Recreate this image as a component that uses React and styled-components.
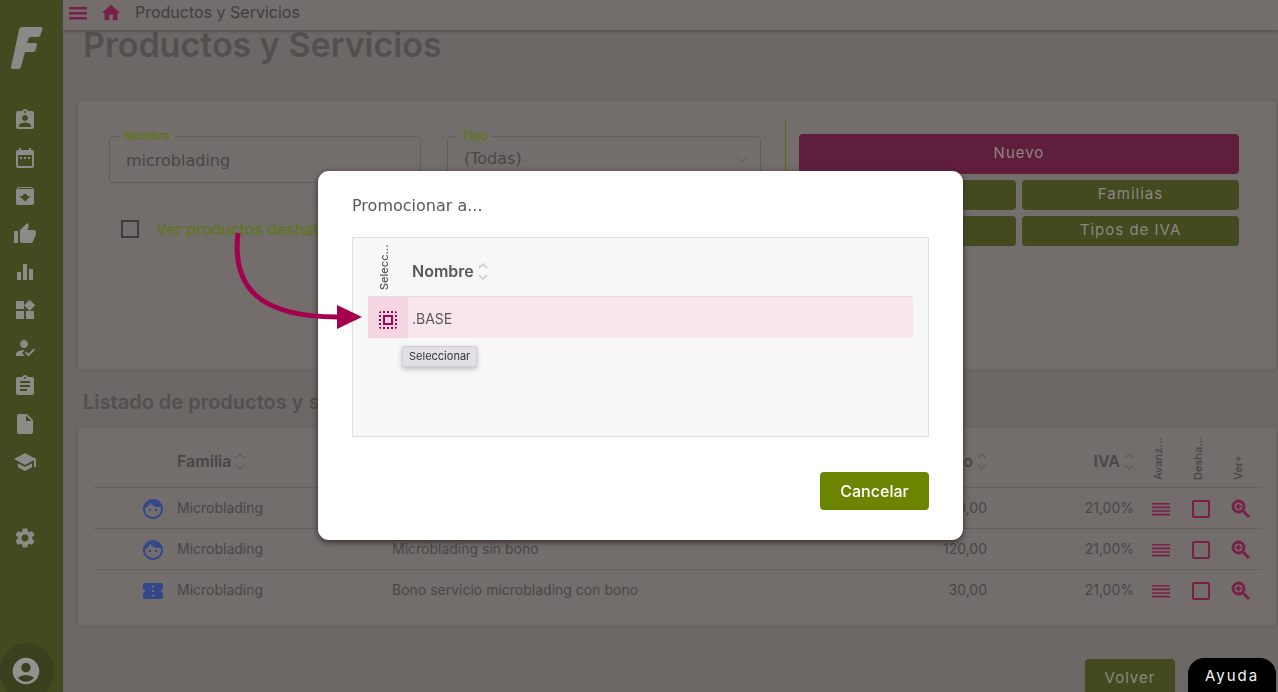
import React from "react";
import styled, { createGlobalStyle, css } from "styled-components";
import {
  MdAssignmentInd, MdDateRange, MdArchive, MdThumbUp, MdEqualizer, MdWidgets,
  MdHowToReg, MdAssignment, MdInsertDriveFile, MdSchool, MdSettings, MdAccountCircle,
  MdHome, MdFace, MdConfirmationNumber, MdCheckBoxOutlineBlank,
  MdZoomIn, MdSelectAll,
} from "react-icons/md";

const c = {
  page: "#6c6866",
  card: "#736d6c",
  line: "#676361",
  text: "#4a4645",
  title: "#544f4e",
  olive: "#444a20",
  berry: "#5f1e3c",
  berryIcon: "#7a1f47",
  lime: "#5b7810",
  blue: "#33488a",
};

const sans = `Inter, "Liberation Sans", sans-serif`;
const humanist = `"DejaVu Sans", "Noto Sans", sans-serif`;

const Global = createGlobalStyle`
  * { box-sizing: border-box; }
  body { margin: 0; background: ${c.page}; color: ${c.text}; font: 14px/20px ${sans}; overflow: hidden; }
  button, input, select { font: inherit; color: inherit; }
  button { border: 0; padding: 0; background: none; }
  h1, h2, p { margin: 0; }
`;

const Shell = styled.div`
  display: flex;
  height: 100vh;
  overflow: hidden;
`;

const Sidebar = styled.nav`
  flex: 0 0 63px;
  display: flex;
  flex-direction: column;
  background: ${c.olive};
  color: #8b8b88;
`;

const Logo = styled.a`
  display: block;
  height: 101px;
  padding: 26px 0 0 10px;
  color: #898a86;
`;

const NavList = styled.ul`
  list-style: none;
  margin: 0;
  padding: 0 0 0 13px;
`;

const NavItem = styled.li`
  height: 38px;
  display: flex;
  align-items: center;
  margin-top: ${(p) => (p.$apart ? "38px" : "0")};
`;

const IconLink = styled.a`
  display: flex;
  color: inherit;
`;

const Account = styled.button`
  width: 54px;
  height: 56px;
  flex: none;
  margin-top: auto;
  margin-bottom: -7px;
  padding-right: 2px;
  border-radius: 28px;
  background: #3a3f1d;
  display: grid;
  place-items: center;
  color: #92928f;
`;

const Main = styled.main`
  flex: 1;
  min-width: 0;
`;

const TopBar = styled.header`
  height: 30px;
  display: flex;
  align-items: center;
  padding: 0 5px 4px;
  background: ${c.card};
  box-shadow: 0 1px 3px #4d4947;
  position: relative;
  color: #413d3c;
`;

const BarButton = styled.button`
  width: 32px;
  height: 24px;
  display: flex;
  align-items: center;
  color: ${c.berryIcon};
`;

const Crumb = styled.span`
  margin-left: 3px;
  padding-bottom: 2px;
  font-size: 16px;
`;

const Title = styled.h1`
  padding: 0 20px;
  height: 70px;
  font-size: 34px;
  line-height: 30px;
  font-weight: 600;
  color: ${c.title};
`;

const Card = styled.section`
  margin: 0 1px 0 14px;
  background: ${c.card};
  border: 1px solid ${c.line};
  border-radius: 4px;
  box-shadow: 0 0 3px ${c.line};
`;

const FilterCard = styled(Card)`
  height: 270px;
  display: flex;
  padding: 20px 37px 0 31px;
`;

const Filters = styled.div`
  flex: 1;
  padding-right: 24px;
`;

const FieldRow = styled.div`
  display: grid;
  grid-template-columns: 312fr 314fr;
  gap: 26px;
`;

const Field = styled.fieldset`
  min-width: 0;
  height: 55px;
  margin: 0;
  margin-top: 7px;
  padding: 0 12px 0 16px;
  border: 1px solid #625d5c;
  border-radius: 4px;
  position: relative;

  legend {
    margin-left: -7px;
    padding: 0 5px;
    color: ${c.lime};
    font-size: 12px;
    line-height: 16px;
    font-weight: 500;
  }
`;

const control = css`
  display: block;
  width: 100%;
  height: 28px;
  margin-top: 2px;
  padding: 0;
  border: 0;
  background: none;
  outline: 0;
  font: 16px/24px ${humanist};
  color: ${c.text};
  appearance: none;
`;

const TextInput = styled.input`${control}`;
const Select = styled.select`
  ${control}
  margin-top: 1px;
`;

const Caret = styled.svg`
  position: absolute;
  right: 12px;
  top: 12px;
  pointer-events: none;
`;

const CheckLabel = styled.label`
  display: flex;
  align-items: center;
  gap: 17px;
  margin: 36px 0 0 12px;
  font-size: 16px;
  color: ${c.lime};
  white-space: nowrap;

  input {
    appearance: none;
    width: 18px;
    height: 18px;
    margin: 0;
    border: 2px solid #3f3b3a;
  }
`;

const Actions = styled.div`
  flex: 0 0 454px;
  border-left: 1px solid #566d14;
  height: 124px;
  padding: 13px 0 0 13px;
  display: grid;
  grid-template-columns: 1fr 1fr;
  grid-template-rows: 40px 30px 30px;
  gap: 6px;
`;

const Button = styled.button`
  border-radius: 4px;
  background: ${(p) => (p.$berry ? c.berry : c.olive)};
  grid-column: ${(p) => (p.$berry ? "1 / -1" : "auto")};
  color: #8b8784;
  font-size: 15px;
  letter-spacing: 1px;
  padding-bottom: 2px;
`;

const Subtitle = styled.h2`
  padding: 21px 20px 0;
  height: 57px;
  font-size: 20px;
  line-height: 22px;
  font-weight: 600;
  color: ${c.title};
`;

const TableCard = styled(Card)`
  height: 199px;
  padding: 0 14px 0 15px;
`;

const Table = styled.table`
  width: 100%;
  table-layout: fixed;
  border-collapse: collapse;

  th, td { padding: 0; text-align: left; white-space: nowrap; }
  thead tr { height: 59px; }
  tbody tr { height: 41px; border-top: 1px solid #66605f; }
  td { vertical-align: middle; }
  th { font-weight: 600; font-size: 16px; }
`;

const Num = styled.td`
  && { text-align: right; }
`;

const HeadLabel = styled.span`
  display: flex;
  align-items: center;
  justify-content: ${(p) => (p.$end ? "flex-end" : "flex-start")};
  gap: 4px;
  padding-top: ${(p) => (p.$low ? "8px" : "0")};
`;

const Upright = styled.span`
  display: block;
  height: 46px;
  margin: 0 0 0 ${(p) => (p.$near ? "8px" : "16px")};
  writing-mode: vertical-rl;
  transform: rotate(180deg);
  font-size: 11px;
  line-height: 16px;
  font-weight: 500;
`;

const CellButton = styled.button`
  display: flex;
  margin: 3px 0 0 ${(p) => p.$indent || "8px"};
  color: ${(p) => p.$color || c.berryIcon};

  path:not([fill="none"]) { stroke-width: ${(p) => (p.$bold ? 1 : 0)}; }
  path[fill="none"] { stroke: none; }
`;

const Footer = styled.footer`
  display: flex;
  justify-content: flex-end;
  align-items: flex-start;
  gap: 13px;
  padding: 32px 2px 0 0;
`;

const FooterButton = styled(Button)`
  width: 90px;
  height: 38px;
  padding: 0;
  margin-top: 1px;
`;

const HelpButton = styled.button`
  width: 88px;
  height: 40px;
  border-radius: 16px 16px 0 0;
  background: #000;
  color: #f4f4f4;
  font-size: 15px;
  letter-spacing: 2px;
  padding-bottom: 4px;
`;

const Overlay = styled.div`
  position: fixed;
  inset: 0;
  display: grid;
  place-items: center;
  padding: 20px 0 1px 3px;
`;

const Dialog = styled.section`
  width: 645px;
  padding: 23px 34px 30px;
  border-radius: 11px;
  background: #fff;
  box-shadow: 0 2px 6px #2e2b2a;
  color: #58585a;
  position: relative;
`;

const DialogTitle = styled.p`
  font: 16px/24px ${humanist};
`;

const Grid = styled.div`
  height: 200px;
  margin: 19px 0 35px;
  padding: 0 15px;
  border: 1px solid #dedede;
  background: #f7f7f7;
`;

const GridTable = styled.table`
  width: 100%;
  border-collapse: collapse;
  table-layout: fixed;

  th, td { padding: 0; text-align: left; }
  th { height: 58px; font-size: 16px; font-weight: 600; }
  tbody tr { height: 42px; background: #f8e6ec; border-top: 1px solid #e4dde0; }
  td:first-child { background: #f6d5e2; padding-top: 2px; }
  td:nth-child(2) { padding: 4px 0 0 4px; }
  th:nth-child(2) { padding: 8px 0 0 4px; }
`;

const DialogFooter = styled.div`
  display: flex;
  justify-content: flex-end;
`;

const Cancel = styled.button`
  width: 109px;
  height: 38px;
  border-radius: 4px;
  background: #6c8500;
  color: #fff;
  font-size: 16px;
  font-weight: 500;
`;

const Tooltip = styled.span`
  position: absolute;
  left: 84px;
  top: 175px;
  padding: 0 6px;
  border-radius: 2px;
  background: #e1e0e6;
  border: 1px solid #d0cfd5;
  box-shadow: 0 2px 5px #bbb;
  color: #333;
  font-size: 11px;
  line-height: 19px;
`;

const Arrow = styled.svg`
  position: absolute;
  left: -86px;
  top: 58px;
  pointer-events: none;
`;

const Sort = ({ color = "#625c5b" }) => (
  <svg width="10" height="18" viewBox="0 0 10 18" fill="none" stroke={color} strokeWidth="1.5" aria-hidden="true">
    <path d="M1 6 5 2l4 4M1 13l4 4 4-4" />
  </svg>
);

const Lines = () => (
  <svg width="24" height="24" viewBox="0 0 24 24" fill="currentColor" aria-hidden="true">
    <path d="M3 6h18v1.600H3zM3 9.600h18v1.600H3zM3 13.200h18v1.600H3zM3 16.800h18v1.600H3z" />
  </svg>
);

const nav = [
  ["Clientes", MdAssignmentInd], ["Agenda", MdDateRange], ["Almacén", MdArchive],
  ["Fidelización", MdThumbUp], ["Estadísticas", MdEqualizer], ["Módulos", MdWidgets],
  ["Personal", MdHowToReg], ["Informes", MdAssignment], ["Documentos", MdInsertDriveFile],
  ["Formación", MdSchool], ["Ajustes", MdSettings],
];

const rows = [
  { icon: MdFace, family: "Microblading", name: "Microblading con bono", price: "120,00" },
  { icon: MdFace, family: "Microblading", name: "Microblading sin bono", price: "120,00" },
  { icon: MdConfirmationNumber, family: "Microblading", name: "Bono servicio microblading con bono", price: "30,00" },
];

export default function App() {
  return (
    <>
      <Global />
      <Shell>
        <Sidebar>
          <Logo href="#" aria-label="Inicio">
            <svg width="34" height="44" viewBox="0 0 34 44" fill="currentColor">
              <path d="M12 1h19q2 0 1.500 2l-2 6q-.6 2-3 2h-7q-1.500 0-2 1.500L17 17h9q1.500 0 1 1.800l-1.500 5.400q-.5 1.800-2.500 1.800h-8l-4 15q-.6 2-2.500 2h-6Q.5 43 1 41L9 4q.6-3 3-3Z" />
            </svg>
          </Logo>
          <NavList>
            {nav.map(([label, Icon]) => (
              <NavItem key={label} $apart={label === "Ajustes"}>
                <IconLink href="#" aria-label={label}><Icon size={24} /></IconLink>
              </NavItem>
            ))}
          </NavList>
          <Account aria-label="Cuenta"><MdAccountCircle size={32} /></Account>
        </Sidebar>
        <Main>
          <TopBar>
            <BarButton aria-label="Menú">
              <svg width="20" height="16" viewBox="0 0 20 16" fill="currentColor"><path d="M1 2h18v2.400H1zM1 7h18v2.400H1zM1 12h18v2.400H1z" /></svg>
            </BarButton>
            <BarButton aria-label="Inicio"><MdHome size={22} /></BarButton>
            <Crumb>Productos y Servicios</Crumb>
          </TopBar>
          <Title>Productos y Servicios</Title>
          <FilterCard>
            <Filters>
              <FieldRow>
                <Field>
                  <legend><label htmlFor="name">Nombre</label></legend>
                  <TextInput id="name" defaultValue="microblading" />
                </Field>
                <Field>
                  <legend><label htmlFor="type">Tipo</label></legend>
                  <Select id="type"><option>(Todas)</option></Select>
                  <Caret width="12" height="8" viewBox="0 0 12 8" fill="none" stroke="#5a5554"><path d="m1 1 5 5 5-5" /></Caret>
                </Field>
              </FieldRow>
              <CheckLabel><input type="checkbox" />Ver productos deshabilitados</CheckLabel>
            </Filters>
            <Actions>
              <Button $berry>Nuevo</Button>
              <Button>Marcas</Button>
              <Button>Familias</Button>
              <Button>Tarifas</Button>
              <Button>Tipos de IVA</Button>
            </Actions>
          </FilterCard>
          <Subtitle>Listado de productos y servicios</Subtitle>
          <TableCard>
            <Table>
              <colgroup>
                <col style={{ width: 84 }} /><col style={{ width: 215 }} /><col /><col style={{ width: 110 }} />
                <col style={{ width: 147 }} /><col style={{ width: 40 }} /><col style={{ width: 40 }} /><col style={{ width: 48 }} />
              </colgroup>
              <thead>
                <tr>
                  <th aria-label="Clase" />
                  <th><HeadLabel $low>Familia <Sort /></HeadLabel></th>
                  <th><HeadLabel $low>Nombre <Sort /></HeadLabel></th>
                  <th><HeadLabel $low $end>Precio <Sort /></HeadLabel></th>
                  <th><HeadLabel $low $end>IVA <Sort /></HeadLabel></th>
                  <th><Upright>Avanz...</Upright></th>
                  <th><Upright>Desha...</Upright></th>
                  <th><Upright>Ver+</Upright></th>
                </tr>
              </thead>
              <tbody>
                {rows.map((r) => (
                  <tr key={r.name}>
                    <td><CellButton $indent="48px" $color={c.blue} aria-label="Clase"><r.icon size={24} /></CellButton></td>
                    <td>{r.family}</td>
                    <td>{r.name}</td>
                    <Num>{r.price}</Num>
                    <Num>21,00%</Num>
                    <td><CellButton $indent="15px" aria-label="Avanzado"><Lines /></CellButton></td>
                    <td><CellButton $indent="15px" aria-label="Deshabilitar"><MdCheckBoxOutlineBlank size={24} /></CellButton></td>
                    <td><CellButton $indent="15px" $bold aria-label="Ver más"><MdZoomIn size={24} /></CellButton></td>
                  </tr>
                ))}
              </tbody>
            </Table>
          </TableCard>
          <Footer>
            <FooterButton>Volver</FooterButton>
            <HelpButton>Ayuda</HelpButton>
          </Footer>
        </Main>
      </Shell>
      <Overlay>
        <Dialog role="dialog" aria-label="Promocionar a...">
          <DialogTitle>Promocionar a...</DialogTitle>
          <Grid>
            <GridTable>
              <colgroup><col style={{ width: 40 }} /><col /></colgroup>
              <thead>
                <tr>
                  <th><Upright $near>Selecc...</Upright></th>
                  <th><HeadLabel>Nombre <Sort color="#c9c9c9" /></HeadLabel></th>
                </tr>
              </thead>
              <tbody>
                <tr>
                  <td><CellButton $color="#a9004f" aria-label="Seleccionar"><MdSelectAll size={24} /></CellButton></td>
                  <td>.BASE</td>
                </tr>
              </tbody>
            </GridTable>
          </Grid>
          <DialogFooter><Cancel>Cancelar</Cancel></DialogFooter>
          <Tooltip role="tooltip">Seleccionar</Tooltip>
          <Arrow width="132" height="104" viewBox="0 0 132 104" fill="none" aria-hidden="true">
            <path d="M6 4C0 56 24 88 106 88" stroke="#a3004f" strokeWidth="5" />
            <path d="m105 76 25 12-25 12Z" fill="#a3004f" />
          </Arrow>
        </Dialog>
      </Overlay>
    </>
  );
}
